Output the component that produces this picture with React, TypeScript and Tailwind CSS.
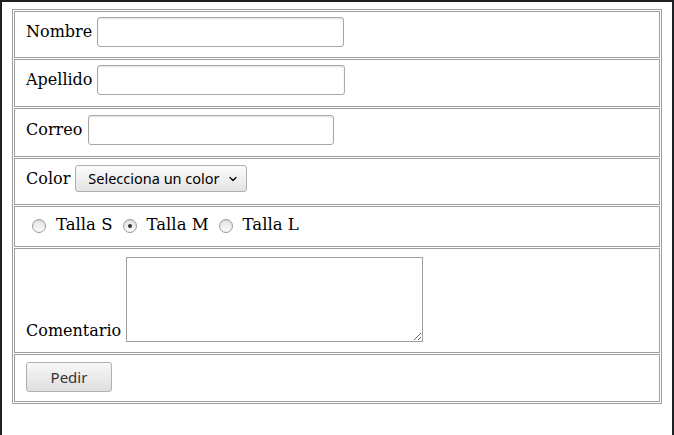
import { ChevronDown } from 'lucide-react';

const serif = "font-['DejaVu_Serif',serif]";
const ui = "font-['Noto_Sans',sans-serif]";

function TextInput({ width }: { width: string }) {
  return (
    <input
      type="text"
      className={`h-[30px] ${width} rounded-[3px] border border-[#a9a9a9] bg-white px-1 text-sm shadow-[inset_0_1px_2px_rgba(0,0,0,0.12)] outline-none`}
    />
  );
}

function Radio({ checked }: { checked?: boolean }) {
  return (
    <span className="flex h-[14px] w-[14px] items-center justify-center rounded-full border border-[#9c9c9c] bg-gradient-to-b from-[#e4e4e4] to-[#fbfbfb] shadow-[inset_0_1px_1px_rgba(0,0,0,0.08)]">
      {checked && <span className="h-[4px] w-[4px] rounded-full bg-[#333]" />}
    </span>
  );
}

const cell = 'border border-[#a0a0a0] px-[11px] py-0 align-middle';

export default function App() {
  return (
    <div className="h-[435px] w-[674px] bg-[#1f2224] px-[2px] pt-[2px]">
      <div className={`h-full w-full bg-white pl-[10px] pt-[7px] text-[16px] text-black ${serif}`}>
        <table className="w-[650px] border-separate border-spacing-[1px] border border-[#a0a0a0]">
          <tbody>
            <tr className="h-[47px]">
              <td className={cell}>
                <div className="flex items-center gap-[5px] pb-[6px]">
                  <span>Nombre</span>
                  <TextInput width="w-[247px]" />
                </div>
              </td>
            </tr>
            <tr className="h-[48px]">
              <td className={cell}>
                <div className="flex items-center gap-[4px] pb-[6px]">
                  <span>Apellido</span>
                  <TextInput width="w-[248px]" />
                </div>
              </td>
            </tr>
            <tr className="h-[49px]">
              <td className={cell}>
                <div className="flex items-center gap-[6px] pb-[6px]">
                  <span>Correo</span>
                  <TextInput width="w-[246px]" />
                </div>
              </td>
            </tr>
            <tr className="h-[47px]">
              <td className={cell}>
                <div className="flex items-center gap-[5px] pb-[6px]">
                  <span>Color</span>
                  <button
                    type="button"
                    className={`flex h-[27px] w-[172px] items-center gap-[7px] rounded-[3px] border border-[#b0b0b0] bg-gradient-to-b from-[#fbfbfb] to-[#e4e4e4] pl-[12px] text-[14.5px] text-black ${ui}`}
                  >
                    Selecciona un color
                    <ChevronDown size={12} strokeWidth={2.5} />
                  </button>
                </div>
              </td>
            </tr>
            <tr className="h-[41px]">
              <td className={cell}>
                <div className="flex items-center pb-[2px] pl-[6px] text-[16.5px]">
                  <Radio />
                  <span className="mx-[10px]">Talla S</span>
                  <Radio checked />
                  <span className="mx-[10px]">Talla M</span>
                  <Radio />
                  <span className="ml-[10px]">Talla L</span>
                </div>
              </td>
            </tr>
            <tr className="h-[105px]">
              <td className={cell}>
                <div className="flex items-end gap-[5px] pb-[3px]">
                  <span className="mb-[-1px]">Comentario</span>
                  <textarea className="h-[85px] w-[297px] resize border border-[#a0a0a0] bg-white outline-none" />
                </div>
              </td>
            </tr>
            <tr className="h-[48px]">
              <td className={cell}>
                <button
                  type="button"
                  className={`mb-[2px] h-[30px] w-[86px] rounded-[3px] border border-[#b0b0b0] bg-gradient-to-b from-[#f8f8f8] to-[#dedede] text-[15px] text-[#333] ${ui}`}
                >
                  Pedir
                </button>
              </td>
            </tr>
          </tbody>
        </table>
      </div>
    </div>
  );
}
